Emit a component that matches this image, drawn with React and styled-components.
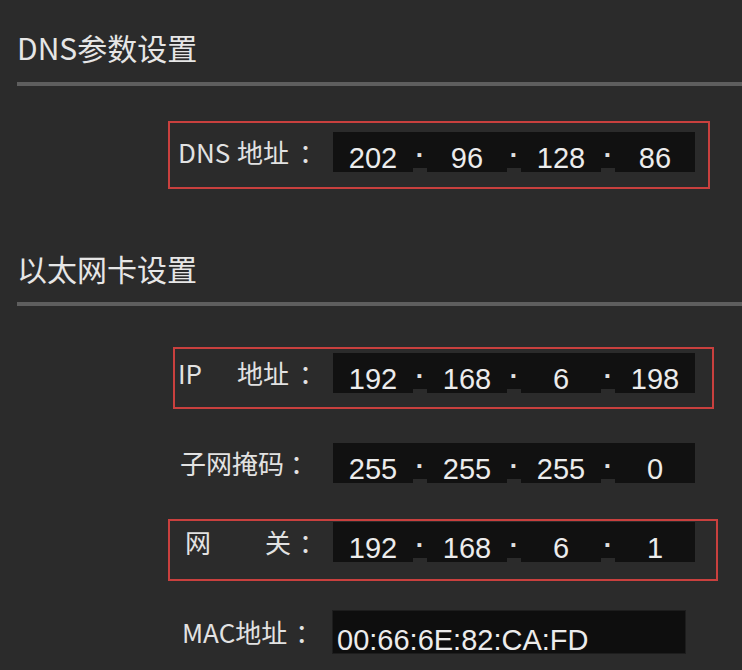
import React from 'react'
import styled, { createGlobalStyle } from 'styled-components'

const GlobalStyle = createGlobalStyle`
  html, body {
    margin: 0;
    padding: 0;
    background: #2b2b2b;
  }
  body {
    font-family: "Noto Sans CJK SC", "Noto Sans", sans-serif;
    color: #e4e4e4;
  }
`

const App = () => {
  return (
    <>
      <GlobalStyle />
      <Page>
        <SectionTitle $mt={27}>DNS参数设置</SectionTitle>
        <Divider $mt={15} />

        <FieldRow $mt={46}>
          <Highlight $left={151} $top={-11} $width={542} $height={68} />
          <Label>
            <Prefix>DNS</Prefix>
            地址<Colon>：</Colon>
          </Label>
          <IpInput octets={['202', '96', '128', '86']} />
        </FieldRow>

        <SectionTitle $mt={76}>以太网卡设置</SectionTitle>
        <Divider $mt={14} />

        <FieldRow $mt={47}>
          <Highlight $left={156} $top={-6} $width={541} $height={62} />
          <Label>
            <Prefix>IP</Prefix>
            地址<Colon>：</Colon>
          </Label>
          <IpInput octets={['192', '168', '6', '198']} />
        </FieldRow>

        <FieldRow $mt={50}>
          <Label $pad={2}>
            子网掩码<Colon $gap={6}>：</Colon>
          </Label>
          <IpInput octets={['255', '255', '255', '0']} />
        </FieldRow>

        <FieldRow $mt={39}>
          <Highlight $left={151} $top={-3} $width={550} $height={62} />
          <Label $pad={7}>
            <Spread>网</Spread>
            关<Colon $gap={8}>：</Colon>
          </Label>
          <IpInput octets={['192', '168', '6', '1']} />
        </FieldRow>

        <FieldRow $mt={48} $h={44}>
          <Label $pad={4}>
            MAC地址<Colon $gap={8}>：</Colon>
          </Label>
          <MacBox>00:66:6E:82:CA:FD</MacBox>
        </FieldRow>
      </Page>
    </>
  )
}

// 4칸짜리 IP 입력 (칸 사이에 점)
const IpInput = ({ octets }) => (
  <IpBox>
    {octets.map((o, i) => (
      <React.Fragment key={i}>
        {i > 0 && <Dot>·</Dot>}
        <Octet>{o}</Octet>
      </React.Fragment>
    ))}
  </IpBox>
)

export default App

const Page = styled.div`
  width: 742px;
  height: 670px;
  padding-left: 17px;
  box-sizing: border-box;
  overflow: hidden;
  display: flex;
  flex-direction: column;
`

const SectionTitle = styled.div`
  margin-top: ${props => props.$mt}px;
  height: 40px;
  line-height: 40px;
  font-size: 30px;
  color: #e6e6e6;
  white-space: nowrap;
`

const Divider = styled.div`
  margin-top: ${props => props.$mt}px;
  height: 4px;
  background: #5e5e5e;
`

const FieldRow = styled.div`
  position: relative;
  margin-top: ${props => props.$mt}px;
  height: ${props => props.$h || 40}px;
  display: flex;
  align-items: center;
  padding-left: 161px;
`

const Highlight = styled.div`
  position: absolute;
  left: ${props => props.$left}px;
  top: ${props => props.$top}px;
  width: ${props => props.$width}px;
  height: ${props => props.$height}px;
  box-sizing: border-box;
  border: 2px solid #c9403e;
  pointer-events: none;
`

const Label = styled.div`
  width: 155px;
  box-sizing: border-box;
  padding-left: ${props => props.$pad || 0}px;
  display: flex;
  align-items: center;
  font-size: 26px;
  line-height: 40px;
  color: #e2e2e2;
  white-space: nowrap;
`

const Prefix = styled.span`
  width: 59px;
`

const Spread = styled.span`
  width: 80px;
`

const Colon = styled.span`
  margin-left: ${props => props.$gap ?? 10}px;
`

const IpBox = styled.div`
  display: flex;
  align-items: flex-start;
  height: 40px;
`

const Octet = styled.div`
  width: 80px;
  height: 40px;
  box-sizing: border-box;
  padding-top: 12px;
  background: #111111;
  text-align: center;
  font-family: "Liberation Sans", Arial, sans-serif;
  font-size: 29px;
  line-height: 28px;
  color: #ececec;
`

const Dot = styled.div`
  width: 14px;
  height: 36px;
  box-sizing: border-box;
  padding-top: 10px;
  background: #111111;
  text-align: center;
  font-family: "Liberation Sans", Arial, sans-serif;
  font-size: 26px;
  line-height: 26px;
  font-weight: bold;
  color: #e0e0e0;
`

const MacBox = styled.div`
  width: 354px;
  height: 44px;
  box-sizing: border-box;
  margin-left: -1px;
  padding: 16px 0 0 4px;
  background: #0e0e0e;
  border: 1px solid #1d1d1d;
  font-family: "Liberation Sans", Arial, sans-serif;
  font-size: 29px;
  line-height: 26px;
  color: #ececec;
  white-space: nowrap;
`
